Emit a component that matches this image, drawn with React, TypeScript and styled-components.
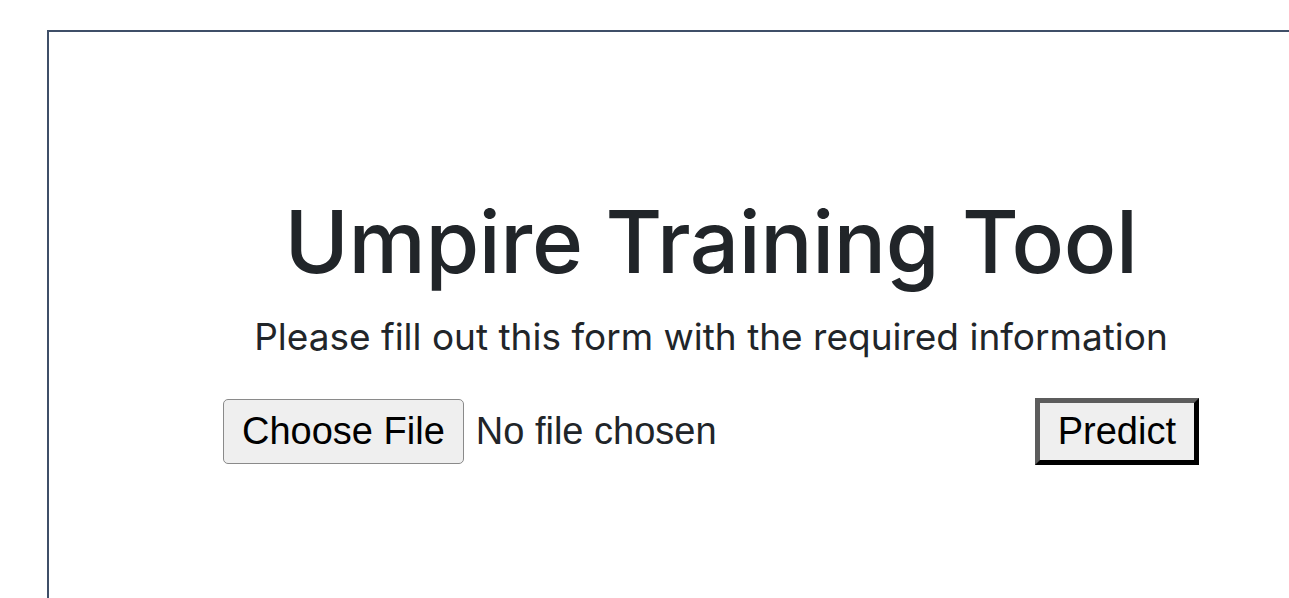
import React from 'react';
import styled, { createGlobalStyle } from 'styled-components';

const GlobalStyle = createGlobalStyle`
  html, body {
    margin: 0;
    padding: 0;
    background: #fff;
    overflow: hidden;
  }
  body {
    font-family: Inter, "Noto Sans", sans-serif;
    color: #212529;
  }
`;

const Page = styled.div`
  padding: 30px 0 0 47px;
`;

const Card = styled.main`
  width: 1328px;
  height: 640px;
  border: 2px solid #3f4f68;
  box-sizing: border-box;
  display: flex;
  flex-direction: column;
  align-items: center;
  padding-top: 158px;
`;

const Title = styled.h1`
  margin: 0;
  font-size: 87px;
  font-weight: 500;
  line-height: 1.2;
  letter-spacing: -0.4px;
`;

const Subtitle = styled.p`
  margin: 15px 0 0;
  font-size: 37px;
  font-weight: 400;
  line-height: 1.5;
`;

const Form = styled.form`
  width: 976px;
  margin-top: 33px;
  display: flex;
  align-items: center;
  justify-content: space-between;
`;

const FileInput = styled.input`
  font-family: "Liberation Sans", Arial, sans-serif;
  font-size: 38px;
  color: #212529;

  &::file-selector-button {
    font: inherit;
    color: #000;
    background: #efefef;
    border: 1.5px solid #8a8a8a;
    border-radius: 5px;
    padding: 8px 18px;
    margin-right: 12px;
    height: 65px;
  }
`;

const SubmitButton = styled.button`
  font-family: "Liberation Sans", Arial, sans-serif;
  font-size: 38px;
  color: #000;
  background: #efefef;
  border-style: solid;
  border-width: 5px;
  border-color: #5c5c5c #000 #000 #5c5c5c;
  padding: 0 18px;
  height: 67px;
`;

export default function App() {
  return (
    <>
      <GlobalStyle />
      <Page>
        <Card>
          <Title>Umpire Training Tool</Title>
          <Subtitle>Please fill out this form with the required information</Subtitle>
          <Form onSubmit={(e) => e.preventDefault()}>
            <FileInput type="file" name="image" />
            <SubmitButton type="submit">Predict</SubmitButton>
          </Form>
        </Card>
      </Page>
    </>
  );
}
